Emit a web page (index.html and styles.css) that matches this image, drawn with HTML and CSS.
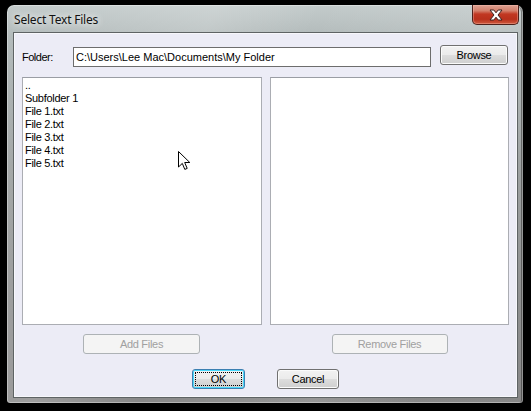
FILE: index.html
```
<!DOCTYPE html>
<html>
<head>
<meta charset="utf-8">
<title>Select Text Files</title>
<link rel="stylesheet" href="styles.css">
</head>
<body>
<div class="window">
  <div class="titlebar">
    <span class="title">Select Text Files</span>
    <button class="close" aria-label="Close">
      <svg width="16" height="12" viewBox="0 0 16 12">
        <path d="M2 1 L5.8 1 L8 3.8 L10.2 1 L14 1 L10 6 L14 11 L10.2 11 L8 8.2 L5.8 11 L2 11 L6 6 Z" fill="#fff" stroke="#3a2320" stroke-width="1" stroke-linejoin="round"/>
      </svg>
    </button>
  </div>
  <div class="client">
    <div class="folder-row">
      <label class="folder-label">Folder:</label>
      <div class="textbox">C:\Users\Lee Mac\Documents\My Folder</div>
      <button class="btn browse">Browse</button>
    </div>
    <div class="lists">
      <div class="listbox">
        <div class="item">..</div>
        <div class="item">Subfolder 1</div>
        <div class="item">File 1.txt</div>
        <div class="item">File 2.txt</div>
        <div class="item">File 3.txt</div>
        <div class="item">File 4.txt</div>
        <div class="item">File 5.txt</div>
      </div>
      <div class="listbox"></div>
    </div>
    <div class="list-actions">
      <div class="cell"><button class="btn disabled add">Add Files</button></div>
      <div class="cell"><button class="btn disabled remove">Remove Files</button></div>
    </div>
    <div class="dialog-actions">
      <button class="btn ok focused">OK</button>
      <button class="btn cancel">Cancel</button>
    </div>
  </div>
  <svg class="cursor" width="13" height="20" viewBox="0 0 13 20">
    <path d="M0.5 0.5 L0.5 16 L4.3 12.4 L6.8 18.4 L9.2 17.4 L6.7 11.5 L11.8 11.5 Z" fill="#fff" stroke="#000" stroke-width="1" stroke-linejoin="miter"/>
  </svg>
</div>
</body>
</html>
```
FILE: styles.css
```
html, body {
  margin: 0;
  padding: 0;
  background: #000;
  width: 531px;
  height: 411px;
  overflow: hidden;
}

body {
  font-family: "Liberation Sans", Arial, sans-serif;
  font-size: 11px;
  color: #000;
}

.window {
  position: relative;
  margin: 5px 0 0 7px;
  width: 516px;
  height: 398px;
  box-sizing: border-box;
  padding: 0 5px 5px 6px;
  border-radius: 7px 7px 3px 3px;
  background:
    linear-gradient(115deg, rgba(255,255,255,0) 0%, rgba(255,255,255,0.18) 30%, rgba(255,255,255,0) 45%, rgba(255,255,255,0.12) 70%, rgba(255,255,255,0) 85%),
    linear-gradient(180deg, #c3cbcb 0%, #b2baba 8%, #9ea2a2 40%, #8f9090 75%, #888888 100%);
  box-shadow: inset 0 0 0 1px rgba(255,255,255,0.35), inset -2px 0 0 rgba(40,40,40,0.5);
  display: flex;
  flex-direction: column;
}

.titlebar {
  position: relative;
  height: 27px;
  flex: none;
}

.title {
  position: absolute;
  left: 1px;
  top: 6px;
  font-family: "Noto Sans", "Open Sans", sans-serif;
  font-size: 12px;
  letter-spacing: -0.2px;
  color: #111;
  text-shadow: 0 0 6px rgba(255,255,255,0.9), 0 0 10px rgba(255,255,255,0.7);
}

.close {
  position: absolute;
  right: -1px;
  top: 0;
  width: 47px;
  height: 20px;
  padding: 0;
  border: 1px solid #4e211b;
  border-top: none;
  border-radius: 0 0 5px 5px;
  background: linear-gradient(180deg, #dca293 0%, #d4806c 30%, #c13722 48%, #b8301c 75%, #cf5a3e 100%);
  box-shadow: inset 0 0 0 1px rgba(255,200,190,0.35);
  display: flex;
  align-items: center;
  justify-content: center;
}

.client {
  flex: 1;
  background: #ececf6;
  border: 1px solid #5e6364;
  box-shadow: inset 0 0 0 1px #f7f7fb;
  padding: 12px 8px 0 8px;
  display: flex;
  flex-direction: column;
}

.folder-row {
  display: flex;
  align-items: center;
  height: 21px;
}

.folder-label {
  width: 51px;
  flex: none;
  padding-top: 3px;
  letter-spacing: -0.5px;
}

.textbox {
  width: 358px;
  height: 20px;
  box-sizing: border-box;
  margin-top: 2px;
  border: 1px solid #6d6d6d;
  background: #fff;
  padding: 3px 2px 0 2px;
  white-space: nowrap;
}

.btn {
  font-family: "Liberation Sans", Arial, sans-serif;
  font-size: 11px;
  letter-spacing: -0.3px;
  color: #000;
  height: 20px;
  padding: 0;
  box-sizing: border-box;
  border: 1px solid #707070;
  border-radius: 3px;
  background: linear-gradient(180deg, #f2f2f2 0%, #ebebeb 50%, #dddddd 51%, #cfcfcf 100%);
  box-shadow: inset 0 0 0 1px #fbfbfb;
  position: relative;
}

.browse {
  width: 68px;
  margin-left: 9px;
  margin-top: -1px;
}

.lists {
  display: grid;
  grid-template-columns: 240px 239px;
  column-gap: 8px;
  margin-top: 11px;
  height: 248px;
}

.listbox {
  background: #fff;
  border: 1px solid #abadb3;
  border-top-color: #9a9da4;
  padding: 1px 2px 0 2px;
}

.item {
  height: 13px;
  line-height: 13px;
  letter-spacing: -0.3px;
  white-space: nowrap;
}

.list-actions {
  display: grid;
  grid-template-columns: 240px 239px;
  column-gap: 8px;
  margin-top: 9px;
}

.cell {
  display: flex;
  justify-content: center;
}

.btn.disabled {
  color: #a0a0a0;
  border-color: #adb2b5;
  background: #f4f4f4;
  box-shadow: none;
}

.add {
  width: 117px;
  margin-right: 1px;
}

.remove {
  width: 116px;
}

.dialog-actions {
  display: flex;
  justify-content: center;
  gap: 32px;
  margin-top: 15px;
}

.ok {
  width: 53px;
}

.cancel {
  width: 62px;
}

.btn.focused {
  border-color: #3c7fb1;
  box-shadow: inset 0 0 0 1px #48d8fb;
}

.btn.focused::after {
  content: "";
  position: absolute;
  left: 2px;
  top: 2px;
  right: 2px;
  bottom: 2px;
  border: 1px dotted #000;
}

.cursor {
  position: absolute;
  left: 171px;
  top: 146px;
}
```
